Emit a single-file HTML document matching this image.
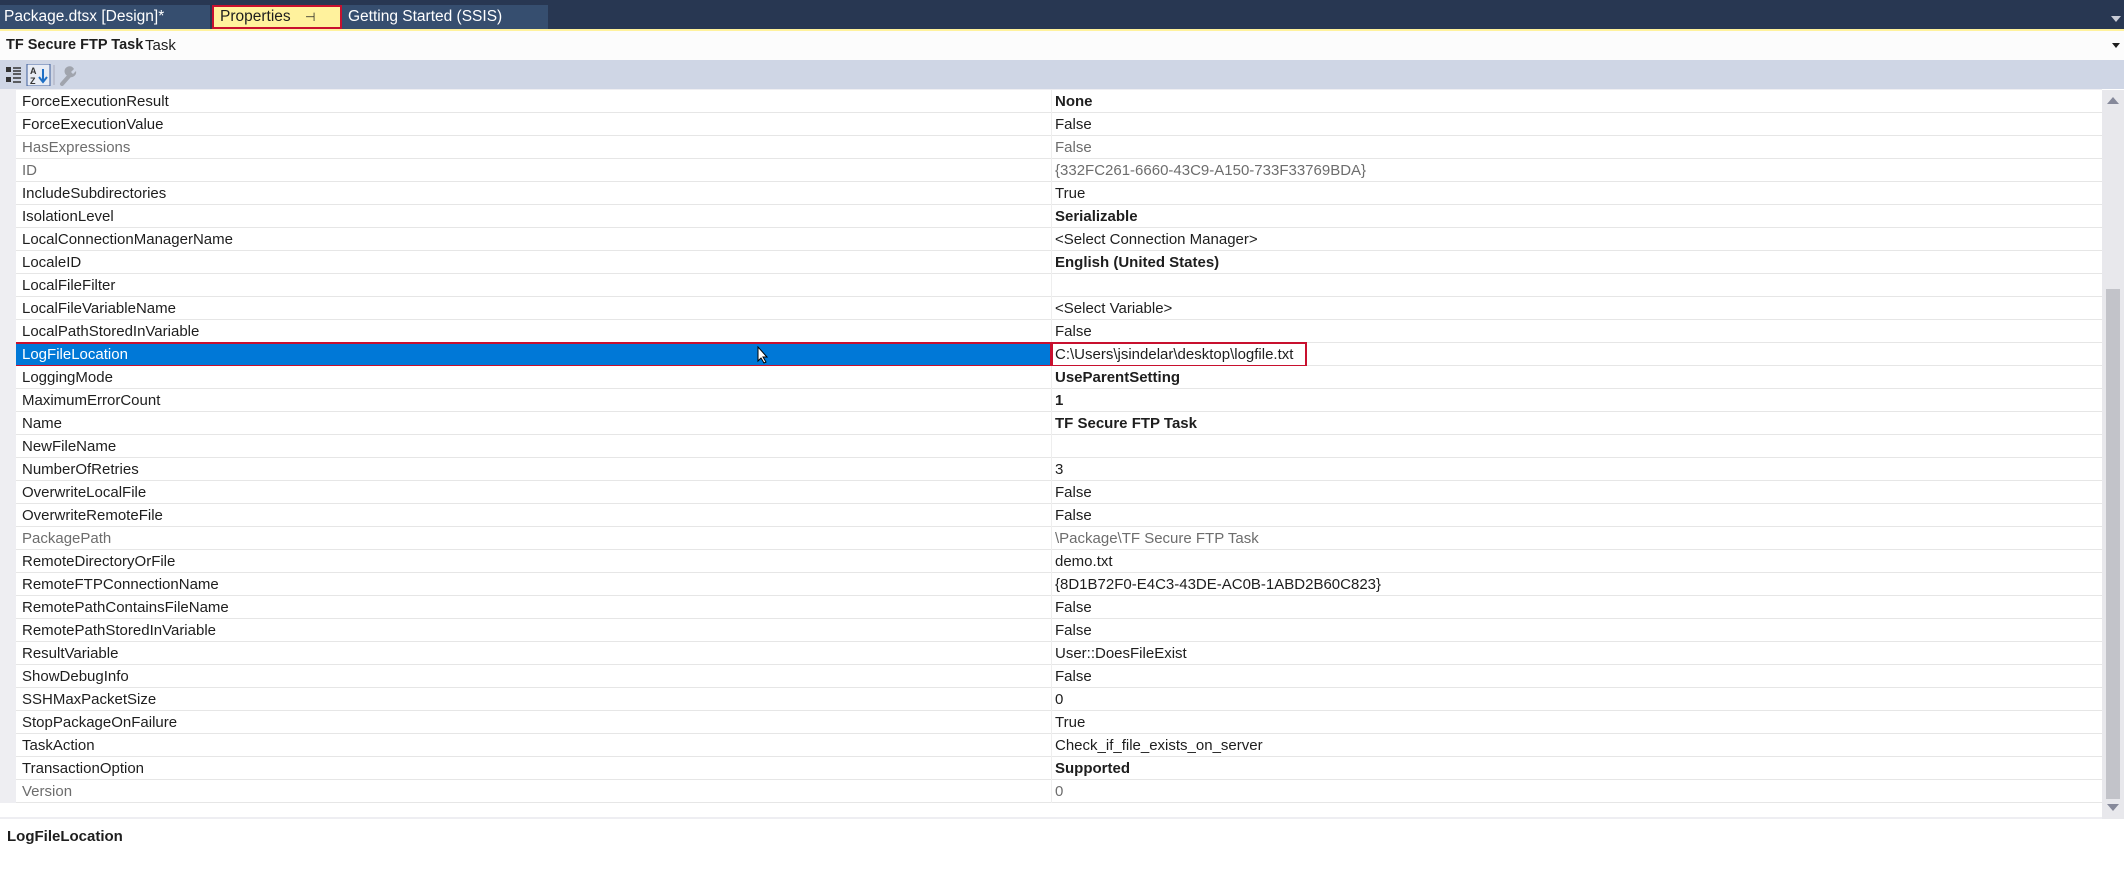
<!DOCTYPE html>
<html><head><style>
*{margin:0;padding:0;box-sizing:border-box}
body{width:2124px;height:889px;background:#fff;font-family:"Liberation Sans",sans-serif;position:relative;overflow:hidden;font-size:15px;color:#1e1e1e}
.abs{position:absolute}
.tabbar{left:0;top:0;width:2124px;height:29px;background:#283752}
.tab{top:5px;height:24px;line-height:24px;color:#fff;font-size:15.5px;padding-left:6px}
.yl{left:0;top:29px;width:2124px;height:2px;background:#fff29d}
.hdr{left:0;top:31px;width:2124px;height:29px;background:#fcfcfc}
.tb{left:0;top:60px;width:2124px;height:29px;background:#cfd6e5}
.gap{left:0;top:89px;width:2102px;height:2px;background:#eeeef2}
.rows{left:0;top:90px;width:2102px}
.row{height:23px;position:relative;border-bottom:1px solid #e6e6e6;background:#fff}
.row .n{position:absolute;left:22px;top:3px;white-space:nowrap}
.row .v{position:absolute;left:1055px;top:3px;white-space:nowrap}
.row .sep{position:absolute;left:1051px;top:0;width:1px;height:23px;background:#eeeeee}
.g{color:#6d6d6d}
.b{font-weight:bold}
.lm{left:0;top:90px;width:16px;height:713px;background:#eeeef2}
</style></head><body>
<div class="abs tabbar"></div>
<div class="abs tab" style="left:0;width:210px;background:#364e6f;padding-left:4px">Package.dtsx [Design]*</div>
<div class="abs tab" style="left:212px;width:130px;background:#fff29d;color:#1e1e1e;border:2px solid #c8102e;line-height:20px">Properties <span style="font-size:12px;margin-left:10px">⊣</span> <span style="margin-left:8px">✕</span></div>
<div class="abs tab" style="left:342px;width:206px;background:#364e6f">Getting Started (SSIS)</div>
<svg class="abs" style="left:2111px;top:16px" width="10" height="6"><polygon points="0,0 10,0 5,6" fill="#c8cbd6"/></svg>
<div class="abs yl"></div>
<div class="abs hdr"><span style="position:absolute;left:6px;top:6px;font-weight:bold;font-size:14.5px">TF Secure FTP Task</span><span style="position:absolute;left:145px;top:6px">Task</span>
<svg style="position:absolute;left:2112px;top:12px" width="8" height="5"><polygon points="0,0 8,0 4,5" fill="#1e1e1e"/></svg></div>
<div class="abs tb">
<svg style="position:absolute;left:4px;top:4px" width="80" height="22">
<rect x="2" y="3" width="5" height="5" fill="#333"/><rect x="2" y="13" width="5" height="5" fill="#333"/>
<g stroke="#333" stroke-width="1.5"><line x1="9" y1="4" x2="17" y2="4"/><line x1="9" y1="7" x2="17" y2="7"/><line x1="9" y1="10" x2="17" y2="10"/><line x1="9" y1="14" x2="17" y2="14"/><line x1="9" y1="18" x2="17" y2="18"/></g>
<rect x="23" y="0" width="23" height="22" fill="#e8ecf4" stroke="#3c5d9b"/>
<text x="26" y="10" font-size="9" font-weight="bold" fill="#333">A</text><text x="26" y="20" font-size="9" font-weight="bold" fill="#333">Z</text>
<path d="M39 5 V17 M35 13 L39 18 L43 13" stroke="#1f6fc5" stroke-width="2" fill="none"/>
<line x1="50" y1="1" x2="50" y2="21" stroke="#aab"/>
<path d="M58 20 L66 11" stroke="#a0a4ad" stroke-width="4" stroke-linecap="round"/>
<path d="M64 12 a5 5 0 1 1 6 -7 L67 8 L69 10 L72 7 A5 5 0 0 1 64 12 Z" fill="#a0a4ad"/>
</svg></div>
<div class="abs gap"></div>
<div class="abs rows">
<div class="row"><span class="n">ForceExecutionResult</span><span class="sep"></span><span class="v b">None</span></div>
<div class="row"><span class="n">ForceExecutionValue</span><span class="sep"></span><span class="v">False</span></div>
<div class="row"><span class="n g">HasExpressions</span><span class="sep"></span><span class="v g">False</span></div>
<div class="row"><span class="n g">ID</span><span class="sep"></span><span class="v g">{332FC261-6660-43C9-A150-733F33769BDA}</span></div>
<div class="row"><span class="n">IncludeSubdirectories</span><span class="sep"></span><span class="v">True</span></div>
<div class="row"><span class="n">IsolationLevel</span><span class="sep"></span><span class="v b">Serializable</span></div>
<div class="row"><span class="n">LocalConnectionManagerName</span><span class="sep"></span><span class="v">&lt;Select Connection Manager&gt;</span></div>
<div class="row"><span class="n">LocaleID</span><span class="sep"></span><span class="v b">English (United States)</span></div>
<div class="row"><span class="n">LocalFileFilter</span><span class="sep"></span><span class="v"></span></div>
<div class="row"><span class="n">LocalFileVariableName</span><span class="sep"></span><span class="v">&lt;Select Variable&gt;</span></div>
<div class="row"><span class="n">LocalPathStoredInVariable</span><span class="sep"></span><span class="v">False</span></div>
<div class="row"><div style="position:absolute;left:16px;top:0;width:1035px;height:23px;background:#0078d7"></div><div style="position:absolute;left:14px;top:-1px;width:1038px;height:25px;border:2px solid #c8102e"></div><span class="n" style="color:#fff">LogFileLocation</span>
<svg style="position:absolute;left:757px;top:3px" width="12" height="18"><path d="M1 1 L1 15 L4 12 L7 17 L9 16 L6 11 L10 11 Z" fill="#fff" stroke="#000"/></svg>
<div style="position:absolute;left:1051px;top:-1px;width:256px;height:25px;border:2px solid #c8102e"></div><span class="v">C:\Users\jsindelar\desktop\logfile.txt</span></div>
<div class="row"><span class="n">LoggingMode</span><span class="sep"></span><span class="v b">UseParentSetting</span></div>
<div class="row"><span class="n">MaximumErrorCount</span><span class="sep"></span><span class="v b">1</span></div>
<div class="row"><span class="n">Name</span><span class="sep"></span><span class="v b">TF Secure FTP Task</span></div>
<div class="row"><span class="n">NewFileName</span><span class="sep"></span><span class="v"></span></div>
<div class="row"><span class="n">NumberOfRetries</span><span class="sep"></span><span class="v">3</span></div>
<div class="row"><span class="n">OverwriteLocalFile</span><span class="sep"></span><span class="v">False</span></div>
<div class="row"><span class="n">OverwriteRemoteFile</span><span class="sep"></span><span class="v">False</span></div>
<div class="row"><span class="n g">PackagePath</span><span class="sep"></span><span class="v g">\Package\TF Secure FTP Task</span></div>
<div class="row"><span class="n">RemoteDirectoryOrFile</span><span class="sep"></span><span class="v">demo.txt</span></div>
<div class="row"><span class="n">RemoteFTPConnectionName</span><span class="sep"></span><span class="v">{8D1B72F0-E4C3-43DE-AC0B-1ABD2B60C823}</span></div>
<div class="row"><span class="n">RemotePathContainsFileName</span><span class="sep"></span><span class="v">False</span></div>
<div class="row"><span class="n">RemotePathStoredInVariable</span><span class="sep"></span><span class="v">False</span></div>
<div class="row"><span class="n">ResultVariable</span><span class="sep"></span><span class="v">User::DoesFileExist</span></div>
<div class="row"><span class="n">ShowDebugInfo</span><span class="sep"></span><span class="v">False</span></div>
<div class="row"><span class="n">SSHMaxPacketSize</span><span class="sep"></span><span class="v">0</span></div>
<div class="row"><span class="n">StopPackageOnFailure</span><span class="sep"></span><span class="v">True</span></div>
<div class="row"><span class="n">TaskAction</span><span class="sep"></span><span class="v">Check_if_file_exists_on_server</span></div>
<div class="row"><span class="n">TransactionOption</span><span class="sep"></span><span class="v b">Supported</span></div>
<div class="row"><span class="n g">Version</span><span class="sep"></span><span class="v g">0</span></div>
</div>
<div class="abs lm"></div>
<div class="abs" style="left:0;top:817px;width:2124px;height:2px;background:#eeeef2"></div>
<div class="abs" style="left:2102px;top:90px;width:22px;height:729px;background:#e8e8ec"></div>
<div class="abs" style="left:2106px;top:289px;width:14px;height:510px;background:#c2c3c9"></div>
<svg class="abs" style="left:2107px;top:97px" width="12" height="7"><polygon points="0,7 12,7 6,0" fill="#86899a"/></svg>
<svg class="abs" style="left:2107px;top:804px" width="12" height="7"><polygon points="0,0 12,0 6,7" fill="#86899a"/></svg>
<div class="abs" style="left:7px;top:828px;font-weight:bold">LogFileLocation</div>
</body></html>
